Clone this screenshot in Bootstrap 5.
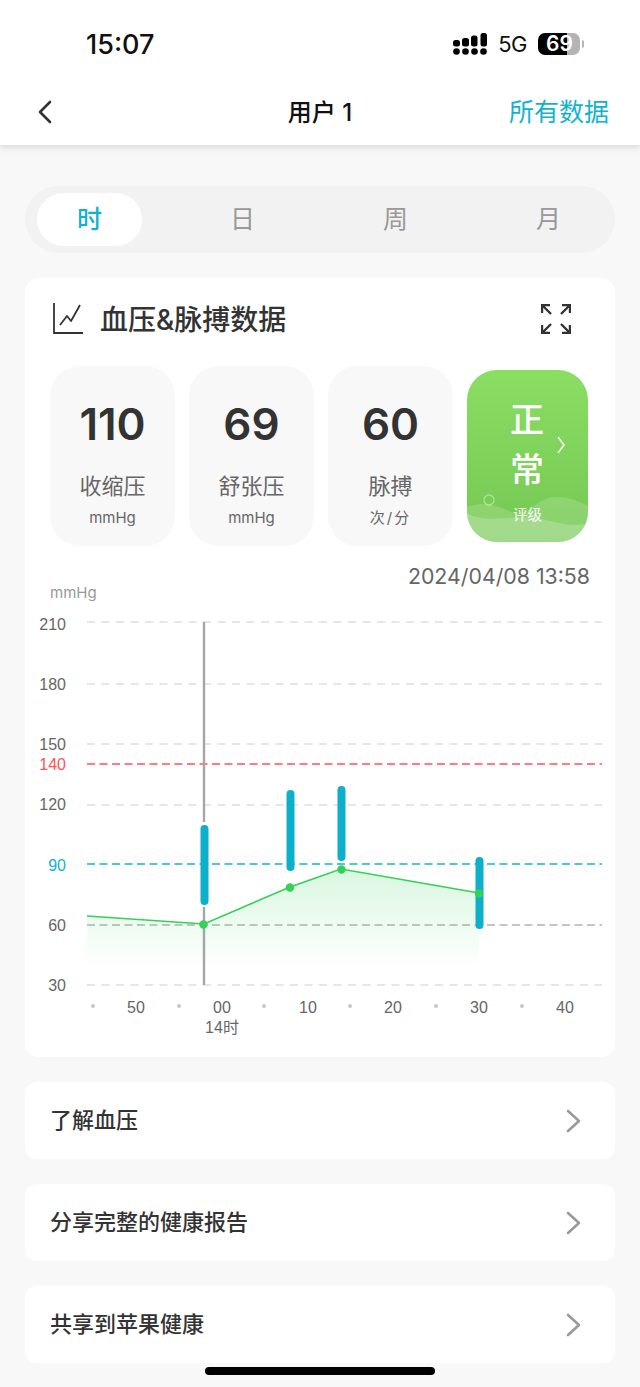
<!DOCTYPE html>
<html lang="zh-CN">
<head>
<meta charset="utf-8">
<title>血压&amp;脉搏数据</title>
<link href="https://cdn.jsdelivr.net/npm/bootstrap@5.3.0/dist/css/bootstrap.min.css" rel="stylesheet">
<style>
html,body{height:1387px;overflow:hidden}
body{background:#f8f8f8;font-family:Inter,"Noto Sans CJK SC",sans-serif;color:#333;width:640px;position:relative}
.top-head{height:145px;box-shadow:0 2px 8px rgba(0,0,0,.14)}
.status-row{height:80px;padding:8px 56px 0 86px}
.clock{font-size:27px;font-weight:500;color:#111;line-height:1}
.signal{margin-right:11px}
.net{font-size:22px;color:#111;line-height:1;margin:0 11px 0 0;letter-spacing:-.5px}
.batt{width:42px;height:22px;border-radius:7px;background:linear-gradient(90deg,#000 0 29px,#b4b4b4 29px);color:#fff;font-weight:600;font-size:21px;line-height:22px;padding-left:8px}
.batt-nub{width:2px;height:8px;background:#b4b4b4;border-radius:0 2px 2px 0;margin-left:2px}
.nav-row{height:65px;padding:0 31px 0 37px;position:relative}
.nav-title{font-size:24px;font-weight:500;color:#111;line-height:1;position:absolute;left:0;right:0;text-align:center;top:21px}
.nav-back{margin-top:20px}
.nav-link-txt{font-size:25px;color:#12b2cf;line-height:1;margin-top:20px}
.seg{margin:41px 25px 0;height:67px;background:#f2f2f2;border-radius:34px;padding:7px 14px 7px 12px}
.seg-item{width:105px;height:53px;border-radius:27px;font-size:25px;color:#999;line-height:53px;text-align:center}
.seg-on{background:#fff;color:#12b2cf;font-weight:500}
.panel{margin:25px 25px 0;height:779px;background:#fff;border:0;border-radius:14px;padding:0 25px}
.panel-head{height:88px;padding:25px 19px 0 3px}
.panel-title{font-size:28px;font-weight:500;color:#333;line-height:1;margin-left:17px;position:relative;top:1px}
.icon-trend{margin-top:0}
.icon-expand{margin-top:1px}
.tile-row{gap:14px}
.tile{width:125px;height:180px;background:#f8f8f8;border-radius:30px;text-align:center;padding-top:34px}
.tile-num{font-size:44px;font-weight:600;line-height:48px;color:#333}
.tile-label{font-size:22px;color:#666;line-height:30px;margin-top:23px}
.tile-unit{font-size:15px;color:#666;line-height:20px;margin-top:7px}
.tile-unit-cn{letter-spacing:2px}
.tile-good{width:121px;height:172px;margin-top:4px;border-radius:30px;background:linear-gradient(180deg,#8ade62,#74c853);position:relative;overflow:hidden;color:#fff;text-align:center}
.waves{position:absolute;left:0;top:0}
.good-txt{position:relative;font-size:34px;font-weight:500;line-height:50px;padding-top:25px;width:120px}
.good-sub{position:relative;font-size:14.5px;line-height:20px;margin-top:10px}
.good-arrow{position:absolute;left:90px;top:66px}
.meta-row{height:56px;padding-top:16px}
.meta-date{font-size:21.3px;line-height:30px;color:#666;white-space:nowrap;margin-top:-1px}
.meta-unit{font-size:15px;line-height:18px;color:#999;align-self:flex-end}
.chart{display:block;margin:0 -25px;font-family:"Liberation Sans",sans-serif}
.link-row{margin:25px 25px 0;height:77px;background:#fff;border:0;border-radius:12px;padding:0 34px 0 25px;font-size:22px;font-weight:500;color:#333}
.home-bar{position:absolute;left:205px;top:1367px;width:230px;height:8px;border-radius:4px;background:#000}
</style>
</head>
<body>
<header class="top-head bg-white">
  <div class="status-row d-flex align-items-center justify-content-between">
    <div class="clock">15:07</div>
    <div class="d-flex align-items-center">
      <svg class="signal" width="34" height="22" viewBox="0 0 34 22"><g fill="#000"><rect x="0" y="7" width="7" height="6.500" rx="2.500"/><rect x="9" y="5" width="7" height="8.500" rx="2.500"/><rect x="18" y="2.500" width="6.500" height="11" rx="2.500"/><rect x="27.500" y="0" width="6.500" height="13.500" rx="2.500"/><circle cx="3.500" cy="18.500" r="3.300"/><circle cx="12.500" cy="18.500" r="3.300"/><circle cx="21.500" cy="18.500" r="3.300"/><circle cx="30.500" cy="18.500" r="3.300"/></g></svg>
      <div class="net">5G</div>
      <div class="batt">69</div>
      <div class="batt-nub"></div>
    </div>
  </div>
  <nav class="nav-row d-flex align-items-start justify-content-between">
    <div class="nav-title">用户 1</div>
    <svg class="nav-back" width="16" height="24" viewBox="0 0 16 24"><path d="M13 2 3 12l10 10" fill="none" stroke="#333" stroke-width="2.600" stroke-linecap="round" stroke-linejoin="round"/></svg>
    <div class="nav-link-txt">所有数据</div>
  </nav>
</header>

<div class="seg d-flex justify-content-between">
  <div class="seg-item seg-on">时</div>
  <div class="seg-item">日</div>
  <div class="seg-item">周</div>
  <div class="seg-item">月</div>
</div>

<section class="panel card">
  <div class="panel-head d-flex align-items-start justify-content-between">
    <div class="d-flex align-items-center">
      <svg class="icon-trend" width="30" height="31" viewBox="0 0 30 31"><path d="M1 0v30h29" fill="none" stroke="#333" stroke-width="1.800"/><path d="M7 22l7-9 4 5 9-16" fill="none" stroke="#333" stroke-width="1.800" stroke-linejoin="round"/></svg>
      <div class="panel-title">血压&amp;脉搏数据</div>
    </div>
    <svg class="icon-expand" width="30" height="30" viewBox="0 0 30 30"><g fill="none" stroke="#333" stroke-width="2.400"><path d="M1 9V1h8M2 2l8 8"/><path d="M29 9V1h-8M28 2l-8 8"/><path d="M1 21v8h8M2 28l8-8"/><path d="M29 21v8h-8M28 28l-8-8"/></g></svg>
  </div>
  <div class="tile-row d-flex align-items-start">
    <div class="tile"><div class="tile-num">110</div><div class="tile-label">收缩压</div><div class="tile-unit">mmHg</div></div>
    <div class="tile"><div class="tile-num">69</div><div class="tile-label">舒张压</div><div class="tile-unit">mmHg</div></div>
    <div class="tile"><div class="tile-num">60</div><div class="tile-label">脉搏</div><div class="tile-unit tile-unit-cn">次/分</div></div>
    <div class="tile-good">
      <svg class="waves" width="121" height="172" viewBox="0 0 121 172"><path d="M0 137C16 131 30 135 44 142 60 149 68 128 88 127 102 127 112 131 121 136V172H0Z" fill="#fff" fill-opacity=".16"/><path d="M0 143C14 152 36 148 56 147 78 146 100 160 121 153V172H0Z" fill="#fff" fill-opacity=".2"/><circle cx="22" cy="130" r="5" fill="none" stroke="#fff" stroke-opacity=".4" stroke-width="1.300"/></svg>
      <div class="good-txt">正<br>常</div>
      <div class="good-sub">评级</div>
      <svg class="good-arrow" width="8" height="18" viewBox="0 0 8 18"><path d="M1 1l6 8-6 8" fill="none" stroke="#fff" stroke-width="1.500"/></svg>
    </div>
  </div>
  <div class="meta-row d-flex justify-content-between align-items-start">
    <div class="meta-unit">mmHg</div>
    <div class="meta-date">2024/04/08 13:58</div>
  </div>
  <svg class="chart" width="590" height="455" viewBox="25 602 590 455">
    <defs><linearGradient id="areaFade" x1="0" y1="869" x2="0" y2="968" gradientUnits="userSpaceOnUse"><stop offset="0" stop-color="#36d35a" stop-opacity=".19"/><stop offset="1" stop-color="#36d35a" stop-opacity="0"/></linearGradient></defs>
    <g stroke="#e6e6e6" stroke-width="2" stroke-dasharray="8 6.500">
      <path d="M87 622H602M87 684H602M87 744H602M87 805H602M87 985H602"/>
    </g>
    <path d="M87 764H602" stroke="#ff5157" stroke-width="1.600" stroke-dasharray="8 4.500"/>
    <path d="M87 864H602" stroke="#12b6d3" stroke-width="1.600" stroke-dasharray="8 4.500"/>
    <path d="M87 925H602" stroke="#b2b2b2" stroke-width="1.600" stroke-dasharray="8 4.500"/>
    <path d="M204 622V822M204 907V985" stroke="#a6a6a6" stroke-width="2.400"/>
    <path d="M87 916 204 924 290 887 341 869 479 893V968H87Z" fill="url(#areaFade)"/>
    <g stroke="#0cb0cb" stroke-width="8" stroke-linecap="round">
      <path d="M204.500 829V901M290.500 794V867M341.500 790V857M479.500 861V925"/>
    </g>
    <path d="M87 916 204 924 290 887 341 869 479 893" fill="none" stroke="#34d058" stroke-width="1.600"/>
    <g fill="#34d058"><circle cx="203.500" cy="924.500" r="4.200"/><circle cx="290" cy="887.500" r="4.200"/><circle cx="341.500" cy="869.500" r="4.200"/><circle cx="479" cy="893.500" r="4.200"/></g>
    <g font-size="16" fill="#666" text-anchor="end">
      <text x="66" y="630">210</text><text x="66" y="690">180</text><text x="66" y="750">150</text><text x="66" y="770" fill="#ff5157">140</text><text x="66" y="810">120</text><text x="66" y="871" fill="#12b2cf">90</text><text x="66" y="931">60</text><text x="66" y="991">30</text>
    </g>
    <g fill="#c8c8c8"><circle cx="93" cy="1006" r="2"/><circle cx="179" cy="1006" r="2"/><circle cx="264" cy="1006" r="2"/><circle cx="350" cy="1006" r="2"/><circle cx="436" cy="1006" r="2"/><circle cx="522" cy="1006" r="2"/></g>
    <g font-size="16" fill="#666" text-anchor="middle">
      <text x="136" y="1013">50</text><text x="222" y="1013">00</text><text x="308" y="1013">10</text><text x="393" y="1013">20</text><text x="479" y="1013">30</text><text x="565" y="1013">40</text>
      <text x="222" y="1033" font-family="Liberation Sans, Noto Sans CJK SC, sans-serif">14时</text>
    </g>
  </svg>
</section>

<a class="link-row card flex-row align-items-center justify-content-between text-decoration-none"><span>了解血压</span><svg width="15" height="24" viewBox="0 0 15 24"><path d="M2 2l11 10L2 22" fill="none" stroke="#999" stroke-width="2.600" stroke-linecap="round" stroke-linejoin="round"/></svg></a>
<a class="link-row card flex-row align-items-center justify-content-between text-decoration-none"><span>分享完整的健康报告</span><svg width="15" height="24" viewBox="0 0 15 24"><path d="M2 2l11 10L2 22" fill="none" stroke="#999" stroke-width="2.600" stroke-linecap="round" stroke-linejoin="round"/></svg></a>
<a class="link-row card flex-row align-items-center justify-content-between text-decoration-none"><span>共享到苹果健康</span><svg width="15" height="24" viewBox="0 0 15 24"><path d="M2 2l11 10L2 22" fill="none" stroke="#999" stroke-width="2.600" stroke-linecap="round" stroke-linejoin="round"/></svg></a>
<div class="home-bar"></div>
<script src="https://cdn.jsdelivr.net/npm/bootstrap@5.3.0/dist/js/bootstrap.bundle.min.js"></script>
</body>
</html>
